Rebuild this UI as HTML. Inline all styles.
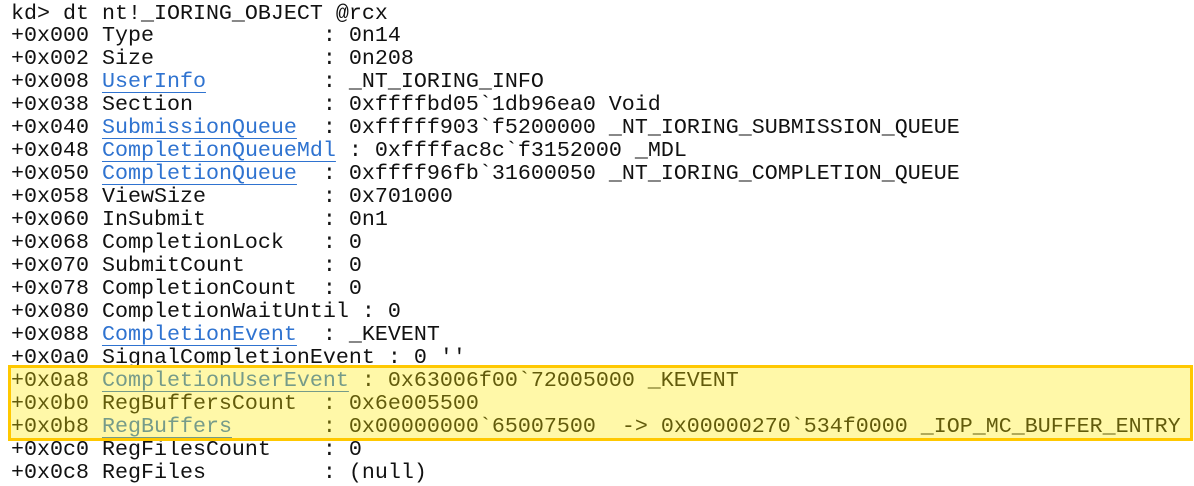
<!DOCTYPE html>
<html><head><meta charset="utf-8"><style>
html,body{margin:0;padding:0;background:#fff;width:1194px;height:486px;overflow:hidden;position:relative}
pre{margin:0;position:absolute;left:11px;top:2.5px;font-family:"Liberation Mono","Courier New",monospace;font-size:21.67px;line-height:22.95px;color:#111}
a{color:#2f73d0;text-decoration:underline;text-decoration-thickness:1px;text-underline-offset:5px}
.box{position:absolute;left:8px;top:365px;width:1185px;height:76px;box-sizing:border-box;border:3px solid #ffc800;background:rgba(255,235,0,0.34)}
</style></head><body>
<pre>kd&gt; dt nt!_IORING_OBJECT @rcx
+0x000 Type             : 0n14
+0x002 Size             : 0n208
+0x008 <a>UserInfo</a>         : _NT_IORING_INFO
+0x038 Section          : 0xffffbd05`1db96ea0 Void
+0x040 <a>SubmissionQueue</a>  : 0xfffff903`f5200000 _NT_IORING_SUBMISSION_QUEUE
+0x048 <a>CompletionQueueMdl</a> : 0xffffac8c`f3152000 _MDL
+0x050 <a>CompletionQueue</a>  : 0xffff96fb`31600050 _NT_IORING_COMPLETION_QUEUE
+0x058 ViewSize         : 0x701000
+0x060 InSubmit         : 0n1
+0x068 CompletionLock   : 0
+0x070 SubmitCount      : 0
+0x078 CompletionCount  : 0
+0x080 CompletionWaitUntil : 0
+0x088 <a>CompletionEvent</a>  : _KEVENT
+0x0a0 SignalCompletionEvent : 0 ''
+0x0a8 <a>CompletionUserEvent</a> : 0x63006f00`72005000 _KEVENT
+0x0b0 RegBuffersCount  : 0x6e005500
+0x0b8 <a>RegBuffers</a>       : 0x00000000`65007500  -&gt; 0x00000270`534f0000 _IOP_MC_BUFFER_ENTRY
+0x0c0 RegFilesCount    : 0
+0x0c8 RegFiles         : (null)</pre>
<div class="box"></div>
</body></html>
